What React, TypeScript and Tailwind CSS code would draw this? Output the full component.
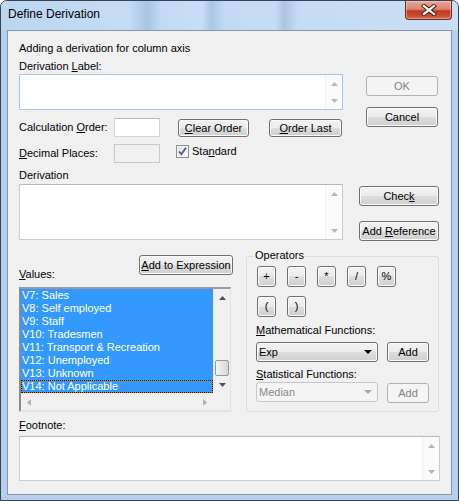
import React from "react";

function U({ children }: { children: React.ReactNode }) {
  return <span className="underline underline-offset-[1px] decoration-[1px]">{children}</span>;
}

function Up({ c = "#a8a8a8" }: { c?: string }) {
  return (
    <svg width="7" height="4" viewBox="0 0 7 4">
      <path d="M0 4 L3.5 0 L7 4Z" fill={c} />
    </svg>
  );
}
function Down({ c = "#a8a8a8" }: { c?: string }) {
  return (
    <svg width="7" height="4" viewBox="0 0 7 4">
      <path d="M0 0 L3.5 4 L7 0Z" fill={c} />
    </svg>
  );
}
function Left({ c = "#a8a8a8" }: { c?: string }) {
  return (
    <svg width="4" height="7" viewBox="0 0 4 7">
      <path d="M4 0 L0 3.5 L4 7Z" fill={c} />
    </svg>
  );
}
function Right({ c = "#a8a8a8" }: { c?: string }) {
  return (
    <svg width="4" height="7" viewBox="0 0 4 7">
      <path d="M0 0 L4 3.5 L0 7Z" fill={c} />
    </svg>
  );
}

function Btn({
  children,
  className = "",
  disabled = false,
}: {
  children: React.ReactNode;
  className?: string;
  disabled?: boolean;
}) {
  return (
    <div
      className={`flex shrink-0 items-center justify-center rounded-[3px] border leading-[13px] ${
        disabled
          ? "border-[#adb2b5] bg-[#f4f4f4] text-[#838383]"
          : "border-[#707070] bg-[linear-gradient(to_bottom,#f2f2f2_0%,#ebebeb_50%,#dddddd_50%,#cfcfcf_100%)] shadow-[inset_0_0_0_1px_#fbfbfb]"
      } ${className}`}
    >
      {children}
    </div>
  );
}

function ScrollBox({ className = "", focused = false }: { className?: string; focused?: boolean }) {
  return (
    <div
      className={`flex shrink-0 border bg-white ${
        focused ? "border-[#a5c8e7]" : "border-[#c9ccd2] border-t-[#b4b7bd]"
      } ${className}`}
    >
      <div className="flex-1" />
      <div className="flex w-[17px] flex-col justify-between border-l border-[#f0f0f0] bg-[#fafafa]">
        <div className="flex h-[17px] items-center justify-center">
          <Up c="#b5b5b5" />
        </div>
        <div className="flex h-[17px] items-center justify-center">
          <Down c="#b5b5b5" />
        </div>
      </div>
    </div>
  );
}

function Drop({ text, disabled = false }: { text: string; disabled?: boolean }) {
  return (
    <div
      className={`flex h-[20px] w-[122px] shrink-0 items-center justify-between rounded-[3px] border pl-[2px] pr-[5px] leading-[13px] ${
        disabled
          ? "border-[#c4c8cb] bg-[#f4f4f4] text-[#8a8a8a]"
          : "border-[#707070] bg-[linear-gradient(to_bottom,#f2f2f2_0%,#ebebeb_50%,#dddddd_50%,#cfcfcf_100%)] shadow-[inset_0_0_0_1px_#fbfbfb]"
      }`}
    >
      <span>{text}</span>
      <svg width="8" height="4" viewBox="0 0 8 4">
        <path d="M0 0 L8 0 L4 4Z" fill={disabled ? "#a8a8a8" : "#000"} />
      </svg>
    </div>
  );
}

const items = [
  "V7: Sales",
  "V8: Self employed",
  "V9: Staff",
  "V10: Tradesmen",
  "V11: Transport & Recreation",
  "V12: Unemployed",
  "V13: Unknown",
  "V14: Not Applicable",
];

export default function App() {
  return (
    <div className="flex h-[501px] w-[459px] flex-col overflow-hidden rounded-t-[7px] border border-[#39434f] bg-[#b7d0eb] font-['Liberation_Sans',Arial,sans-serif] text-[11px] leading-[13px] text-black">
      {/* Title bar */}
      <div className="flex h-[29px] shrink-0 justify-between bg-[linear-gradient(to_right,#bcd6f0_0%,#c4dcf4_28%,#a9c5e3_32%,#c2daf3_35%,#c6def6_44%,#abc7e5_46%,#c2daf3_49%,#c5dcf4_60%,#abc5e1_62%,#c4dcf4_65%,#c9dff5_100%)]">
        <div className="ml-[7px] mt-[6px] text-[12px] leading-[15px] text-black">Define Derivation</div>
        <div className="mr-[6px] flex h-[19px] w-[47px] items-center justify-center rounded-b-[4px] border border-t-0 border-[#6b2a21] bg-[linear-gradient(to_bottom,#eaa898_0%,#d98571_45%,#c2391f_55%,#c94a30_80%,#da6a4e_100%)] shadow-[inset_0_0_0_1px_rgba(255,220,210,0.45)]">
          <svg width="16" height="12" viewBox="0 0 16 12">
            <path d="M3 2 L13 10 M13 2 L3 10" stroke="#4a2a26" strokeWidth="4.2" strokeLinecap="square" />
            <path d="M3 2 L13 10 M13 2 L3 10" stroke="#ffffff" strokeWidth="2.2" strokeLinecap="square" />
          </svg>
        </div>
      </div>

      {/* Client area */}
      <div className="mx-[6px] flex h-[465px] shrink-0 flex-col border border-[#8596a9] bg-[#f0f0f0] pl-[11px] pt-[11px]">
        {/* Top section */}
        <div className="flex">
          <div className="flex w-[324px] flex-col">
            <div>Adding a derivation for column axis</div>
            <div className="mt-[5px]">
              Derivation <U>L</U>abel:
            </div>
            <ScrollBox focused className="mt-[1px] h-[36px] w-[324px]" />
            <div className="mt-[8px] flex h-[19px] items-start">
              <div className="mt-[3px] w-[95px]">
                Calculation <U>O</U>rder:
              </div>
              <div className="h-[19px] w-[46px] border border-[#d0d3d8] border-t-[#b4b7bd] bg-white" />
              <Btn className="ml-[18px] mt-[1px] h-[18px] w-[71px]">
                <span>
                  <U>C</U>lear Order
                </span>
              </Btn>
              <Btn className="ml-[20px] mt-[1px] h-[18px] w-[73px]">
                <span>
                  <U>O</U>rder Last
                </span>
              </Btn>
            </div>
            <div className="mt-[7px] flex h-[19px] items-start">
              <div className="mt-[3px] w-[95px]">
                <U>D</U>ecimal Places:
              </div>
              <div className="h-[19px] w-[46px] border border-[#c6c8cb] bg-[#f0f0f0]" />
              <div className="ml-[16px] mt-[1px] flex h-[13px] w-[13px] items-center justify-center border border-[#8e8f8f] bg-[linear-gradient(135deg,#dcdcdc,#ffffff)] shadow-[inset_0_0_0_1px_#f4f4f4]">
                <svg width="11" height="11" viewBox="0 0 11 11">
                  <path d="M2 5.5 L4.3 8.3 L9 1.8" stroke="#4a5f97" strokeWidth="1.9" fill="none" />
                </svg>
              </div>
              <div className="ml-[3px] mt-[1px]">
                Sta<U>n</U>dard
              </div>
            </div>
            <div className="mt-[6px]">Derivation</div>
            <ScrollBox className="mt-[2px] h-[56px] w-[324px]" />
          </div>
          <div className="ml-[16px] flex w-[80px] flex-col">
            <Btn disabled className="ml-[7px] mt-[34px] h-[20px] w-[72px]">
              OK
            </Btn>
            <Btn className="ml-[7px] mt-[11px] h-[20px] w-[72px]">Cancel</Btn>
            <Btn className="mt-[59px] h-[20px] w-[80px]">
              <span>
                Chec<U>k</U>
              </span>
            </Btn>
            <Btn className="mt-[15px] h-[20px] w-[80px]">
              <span>
                Add <U>R</U>eference
              </span>
            </Btn>
          </div>
        </div>

        {/* Lower section */}
        <div className="mt-[14px] flex">
          <div className="flex w-[214px] flex-col">
            <div className="flex h-[26px] justify-between">
              <div className="mt-[13px]">
                <U>V</U>alues:
              </div>
              <Btn className="h-[20px] w-[94px]">
                <span>
                  <U>A</U>dd to Expression
                </span>
              </Btn>
            </div>
            <div className="mt-[6px] flex h-[125px] w-[212px] flex-col border-b-2 border-l-2 border-r border-t-2 border-b-[#e3e3e3] border-l-[#8a8a8a] border-r-[#e3e3e3] border-t-[#9a9a9a]">
              <div className="flex h-[104px]">
                <div className="flex w-[192px] flex-col overflow-hidden bg-white">
                  {items.map((t, i) => (
                    <div
                      key={t}
                      className={`h-[13px] shrink-0 whitespace-nowrap bg-[#3399ff] leading-[11px] text-white ${
                        i === items.length - 1
                          ? "border border-[#d08020] outline-1 outline-dotted outline-[#1a1a1a] -outline-offset-1"
                          : "border border-[#3399ff]"
                      }`}
                    >
                      {t}
                    </div>
                  ))}
                </div>
                <div className="flex w-[17px] flex-col border-l border-[#e8e8e8] bg-[#f0f0f0]">
                  <div className="flex h-[17px] shrink-0 items-center justify-center">
                    <Up c="#505050" />
                  </div>
                  <div className="flex-1" />
                  <div className="mx-[1px] h-[16px] shrink-0 rounded-[2px] border border-[#979797] bg-[linear-gradient(to_right,#f4f4f4,#e6e6e6_50%,#d6d6d6)]" />
                  <div className="flex h-[17px] shrink-0 items-center justify-center">
                    <Down c="#505050" />
                  </div>
                </div>
              </div>
              <div className="flex h-[17px]">
                <div className="flex w-[192px] items-center justify-between border-t border-[#e8e8e8] bg-[#f0f0f0] px-[6px]">
                  <Left c="#b0b0b0" />
                  <Right c="#b0b0b0" />
                </div>
                <div className="w-[17px] bg-[#f0f0f0]" />
              </div>
            </div>
          </div>

          {/* Operators group */}
          <div className="relative ml-[13px] mt-[1px] flex h-[156px] w-[193px] flex-col rounded-[3px] border border-[#d5dfe5] pl-[9px] pt-[9px]">
            <div className="absolute left-[7px] top-[-8px] bg-[#f0f0f0] px-[1px]">Operators</div>
            <div className="ml-[1px] flex gap-[11px]">
              {["+", "-", "*", "/", "%"].map((o) => (
                <Btn key={o} className="h-[21px] w-[19px]">
                  {o}
                </Btn>
              ))}
            </div>
            <div className="ml-[1px] mt-[9px] flex gap-[11px]">
              {["(", ")"].map((o) => (
                <Btn key={o} className="h-[21px] w-[19px]">
                  {o}
                </Btn>
              ))}
            </div>
            <div className="mt-[7px]">
              <U>M</U>athematical Functions:
            </div>
            <div className="mt-[5px] flex items-start">
              <Drop text="Exp" />
              <Btn className="ml-[9px] h-[20px] w-[42px]">Add</Btn>
            </div>
            <div className="mt-[6px]">
              <U>S</U>tatistical Functions:
            </div>
            <div className="mt-[1px] flex items-start">
              <Drop text="Median" disabled />
              <Btn disabled className="ml-[9px] mt-[1px] h-[20px] w-[42px]">
                Add
              </Btn>
            </div>
          </div>
        </div>

        {/* Footnote */}
        <div className="mt-[7px]">
          <U>F</U>ootnote:
        </div>
        <ScrollBox className="mt-[4px] h-[45px] w-[421px]" />
      </div>
    </div>
  );
}
